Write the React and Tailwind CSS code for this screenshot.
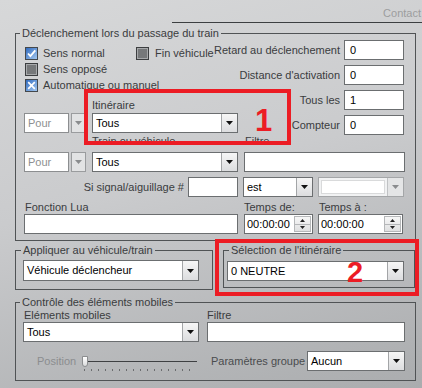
function Arrow({ color = '#111' }) {
  return (
    <svg width="7" height="4" viewBox="0 0 7 4">
      <path d="M0 0h7L3.5 4z" fill={color} />
    </svg>
  );
}

function Select({ value, className = '' }) {
  return (
    <div className={`flex h-[20px] border border-[#6b6e70] bg-white ${className}`}>
      <div className="flex-1 truncate pl-[3px] leading-[18px] text-black">{value}</div>
      <div className="flex w-[16px] items-center justify-center border-l border-[#a3a5a7] bg-gradient-to-b from-[#f6f6f6] to-[#dcdddf]">
        <Arrow />
      </div>
    </div>
  );
}

function PourSelect() {
  return (
    <div className="flex h-[20px] w-[62px] gap-[2px]">
      <div className="w-[45px] border border-[#8c8e90] bg-white pl-[3px] leading-[18px] text-[#8d8f91]">Pour</div>
      <div className="flex flex-1 items-center justify-center border border-[#9a9c9e] bg-[#e2e3e4]">
        <Arrow color="#8a8c8e" />
      </div>
    </div>
  );
}

function Field({ value = '', className = '' }) {
  return (
    <div className={`h-[20px] border border-[#6b6e70] bg-white pl-[5px] leading-[18px] text-black ${className}`}>{value}</div>
  );
}

function Spinner({ className = '' }) {
  return (
    <div className={`flex h-[20px] border border-[#6b6e70] bg-white ${className}`}>
      <div className="flex-1 pl-[2px] leading-[18px] text-black">00:00:00</div>
      <div className="my-[1px] mr-[1px] flex w-[17px] flex-col border border-[#b5b7b9] bg-gradient-to-b from-[#f7f7f7] to-[#dfe0e1]">
        <div className="flex flex-1 items-center justify-center border-b border-[#b5b7b9]">
          <svg width="5" height="3" viewBox="0 0 5 3"><path d="M0 3h5L2.5 0z" fill="#222" /></svg>
        </div>
        <div className="flex flex-1 items-center justify-center">
          <svg width="5" height="3" viewBox="0 0 5 3"><path d="M0 0h5L2.5 3z" fill="#222" /></svg>
        </div>
      </div>
    </div>
  );
}

function Box({ kind }) {
  if (kind === 'off') {
    return (
      <svg width="13" height="13" viewBox="0 0 13 13" className="shrink-0">
        <rect x="0.5" y="0.5" width="12" height="12" fill="#76787a" stroke="#3c3e40" />
        <rect x="1.5" y="1.5" width="10" height="10" fill="none" stroke="#a7a9ab" />
      </svg>
    );
  }
  return (
    <svg width="13" height="13" viewBox="0 0 13 13" className="shrink-0">
      <defs>
        <linearGradient id={`g-${kind}`} x1="0" y1="0" x2="1" y2="1">
          <stop offset="0" stopColor="#2a66bd" />
          <stop offset="1" stopColor="#a9ccf2" />
        </linearGradient>
      </defs>
      <rect x="0.5" y="0.5" width="12" height="12" fill={`url(#g-${kind})`} stroke="#44484c" />
      {kind === 'check' ? (
        <path d="M3 6.5l2.4 2.6L10.3 3.4" stroke="#fff" strokeWidth="1.8" fill="none" />
      ) : (
        <path d="M3.2 3.2l6.6 6.6M9.8 3.2l-6.6 6.6" stroke="#fff" strokeWidth="1.7" fill="none" />
      )}
    </svg>
  );
}

function Group({ title, className = '', legendClass = 'ml-[4px]', children }) {
  return (
    <fieldset className={`border border-[#505355] ${className}`}>
      <legend className={`px-[2px] leading-[13px] text-[#3a3c3e] ${legendClass}`}>{title}</legend>
      {children}
    </fieldset>
  );
}

export default function App() {
  return (
    <div className="relative h-[388px] w-[422px] overflow-hidden bg-[linear-gradient(165deg,#d7d8d9_0%,#cacbcd_45%,#aaacae_100%)] font-['Liberation_Sans',Arial,sans-serif] text-[11px] text-[#3a3c3e]">
      <div className="flex h-[22px] justify-end pr-[1px] pt-[6px] leading-[14px] text-[#9c9d9e]">Contact</div>
      <div className="ml-[172px] h-px bg-[#3c3f41]" />

      <Group title="Déclenchement lors du passage du train" className="ml-[15px] mt-[4px] w-[401px]">
        <div className="pb-[6px] pl-[8px] pr-[10px]">
          <div className="flex">
            <div className="w-[266px]">
              <div className="flex flex-col gap-[3px] pl-[1px] pt-[7px]">
                <div className="flex h-[13px] items-center">
                  <div className="flex w-[111px] items-center gap-[5px]">
                    <Box kind="check" />
                    Sens normal
                  </div>
                  <div className="flex items-center gap-[6px]">
                    <Box kind="off" />
                    Fin véhicule
                  </div>
                </div>
                <div className="flex h-[13px] items-center gap-[5px]">
                  <Box kind="off" />
                  Sens opposé
                </div>
                <div className="flex h-[13px] items-center gap-[5px]">
                  <Box kind="x" />
                  Automatique ou manuel
                </div>
              </div>
              <div className="mt-[7px] flex items-end gap-[6px]">
                <PourSelect />
                <div className="w-[146px]">
                  <div className="leading-[13px]">Itinéraire</div>
                  <Select value="Tous" className="mt-[1px]" />
                </div>
              </div>
            </div>
            <div className="flex w-[114px] flex-col gap-[5px]">
              {[
                ['Retard au déclenchement', '0'],
                ["Distance d'activation", '0'],
                ['Tous les', '1'],
                ['Compteur', '0'],
              ].map(([label, value]) => (
                <div key={label} className="flex h-[20px] items-center justify-end gap-[4px]">
                  <span className="whitespace-nowrap">{label}</span>
                  <Field value={value} className="w-[60px] shrink-0" />
                </div>
              ))}
            </div>
          </div>

          <div className="flex leading-[13px]">
            <div className="w-[68px]" />
            <div className="w-[152px]">Train ou véhicule</div>
            <div className="pl-[1px]">Filtre</div>
          </div>
          <div className="mt-[4px] flex gap-[6px]">
            <PourSelect />
            <Select value="Tous" className="w-[146px]" />
            <Field className="flex-1" />
          </div>

          <div className="mt-[5px] flex h-[20px] items-center">
            <div className="flex w-[160px] justify-end whitespace-nowrap">Si signal/aiguillage #</div>
            <Field className="ml-[4px] w-[50px]" />
            <Select value="est" className="ml-[5px] w-[70px]" />
            <div className="ml-[5px] flex h-[20px] w-[86px] border border-[#a4a6a8] bg-[#f1f2f3]">
              <div className="m-[2px] flex-1 border border-[#d9dadb] bg-white" />
              <div className="flex w-[16px] items-center justify-center border-l border-[#c0c2c4] bg-[#e4e5e6]">
                <Arrow color="#8a8c8e" />
              </div>
            </div>
          </div>

          <div className="mt-[4px] flex leading-[13px]">
            <div className="w-[220px] pl-[1px]">Fonction Lua</div>
            <div className="w-[75px]">Temps de:</div>
            <div>Temps à :</div>
          </div>
          <div className="flex">
            <Field className="w-[214px]" />
            <Spinner className="ml-[6px] w-[69px]" />
            <Spinner className="ml-[5px] w-[85px]" />
          </div>
        </div>
      </Group>

      <div className="mt-[3px] flex items-start">
        <Group title="Appliquer au véhicule/train" className="ml-[15px] w-[198px]" legendClass="ml-[5px]">
          <div className="pb-[8px] pl-[7px] pt-[3px]">
            <Select value="Véhicule déclencheur" className="h-[21px] w-[176px]" />
          </div>
        </Group>
        <Group title="Sélection de l'itinéraire" className="ml-[10px] w-[192px]" legendClass="ml-[5px]">
          <div className="pb-[6px] pl-[3px] pt-[4px]">
            <Select value="0 NEUTRE" className="w-[177px]" />
          </div>
        </Group>
      </div>

      <Group title="Contrôle des éléments mobiles" className="ml-[15px] mt-[6px] w-[401px]">
        <div className="pb-[9px] pl-[7px] pr-[10px]">
          <div className="flex leading-[13px]">
            <div className="w-[184px] pl-[1px]">Eléments mobiles</div>
            <div>Filtre</div>
          </div>
          <div className="flex">
            <Select value="Tous" className="w-[176px]" />
            <Field className="ml-[8px] flex-1" />
          </div>
          <div className="mt-[9px] flex h-[20px] items-center">
            <div className="w-[59px] pl-[14px] text-[#8b8d8f]">Position</div>
            <div className="relative h-[20px] w-[116px]">
              <div className="absolute left-0 top-[5px] h-[11px] w-[6px] rounded-b-[3px] border border-[#8c8e90] bg-gradient-to-b from-white to-[#dadbdc]" />
              <div className="absolute left-[6px] right-[1px] top-[10px] h-px bg-[#3e4042]" />
              <div className="absolute left-[2px] right-[2px] top-[18px] h-[2px] bg-[repeating-linear-gradient(90deg,#6a6c6e_0_1px,transparent_1px_7px)]" />
            </div>
            <div className="ml-[13px] whitespace-nowrap text-[#4a4c4e]">Paramètres groupe</div>
            <Select value="Aucun" className="ml-auto w-[98px]" />
          </div>
        </div>
      </Group>

      <div className="absolute left-[84px] top-[89px] h-[56px] w-[207px] border-4 border-[#ec1c24]" />
      <div className="absolute left-[255px] top-[110px] text-[31px] font-bold leading-[22px] text-[#ec1c24]">1</div>
      <div className="absolute left-[215px] top-[239px] h-[57px] w-[204px] border-4 border-[#ec1c24]" />
      <div className="absolute left-[347px] top-[262px] text-[29px] font-bold leading-[21px] text-[#ec1c24]">2</div>
    </div>
  );
}
